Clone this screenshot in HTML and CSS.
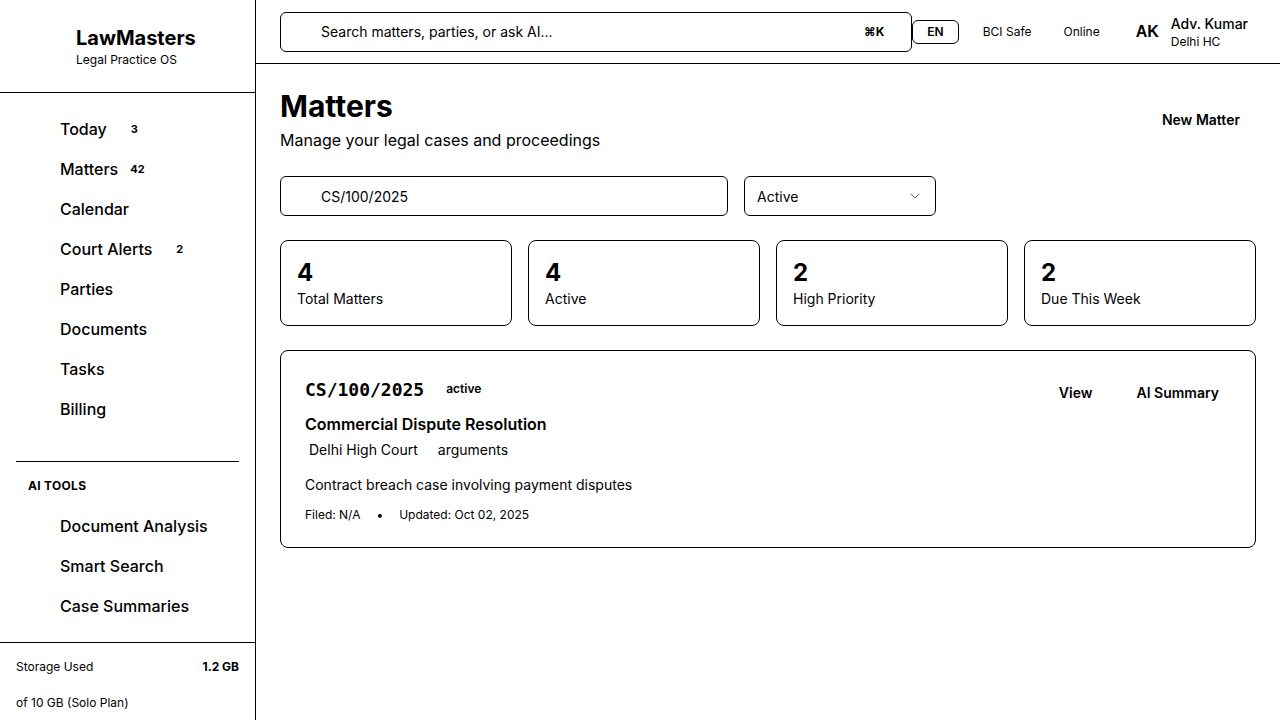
FILE: index.html
```html
<!DOCTYPE html>
<html lang="en">
<head>
  <meta charset="UTF-8" />
  <meta name="viewport" content="width=device-width, initial-scale=1" />
  <title>LawMasters - Matters</title>
  <link rel="stylesheet" href="styles.css">
</head>
<body>

  <aside class="sidebar">
    <div class="brand">
      <div class="brand__name">LawMasters</div>
      <div class="brand__tag">Legal Practice OS</div>
    </div>

    <nav class="nav">
      <a class="nav__item">Today <span class="nav__badge nav__badge--wide">3</span></a>
      <a class="nav__item">Matters <span class="nav__badge">42</span></a>
      <a class="nav__item">Calendar</a>
      <a class="nav__item">Court Alerts <span class="nav__badge nav__badge--wide">2</span></a>
      <a class="nav__item">Parties</a>
      <a class="nav__item">Documents</a>
      <a class="nav__item">Tasks</a>
      <a class="nav__item">Billing</a>
    </nav>

    <div class="tools">
      <div class="tools__title">AI Tools</div>
      <a class="nav__item">Document Analysis</a>
      <a class="nav__item">Smart Search</a>
      <a class="nav__item">Case Summaries</a>
    </div>

    <div class="storage">
      <div class="storage__row">
        <span>Storage Used</span>
        <strong>1.2 GB</strong>
      </div>
      <div class="storage__plan">of 10 GB (Solo Plan)</div>
    </div>
  </aside>

  <div class="main">
    <header class="topbar">
      <div class="search">
        <span class="search__text">Search matters, parties, or ask AI...</span>
        <span class="search__kbd">⌘K</span>
      </div>
      <button class="lang">EN</button>
      <span class="status">BCI Safe</span>
      <span class="status">Online</span>
      <div class="user">
        <span class="user__avatar">AK</span>
        <div>
          <div class="user__name">Adv. Kumar</div>
          <div class="user__court">Delhi HC</div>
        </div>
      </div>
    </header>

    <main class="page">
      <div class="page__head">
        <div>
          <h1 class="page__title">Matters</h1>
          <p class="page__sub">Manage your legal cases and proceedings</p>
        </div>
        <button class="btn">New Matter</button>
      </div>

      <div class="filters">
        <div class="field field--search">CS/100/2025</div>
        <div class="field field--select">
          <span>Active</span>
          <svg width="16" height="16" viewBox="0 0 24 24" fill="none" stroke="#666" stroke-width="1.5" stroke-linecap="round" stroke-linejoin="round"><polyline points="6 9 12 15 18 9" /></svg>
        </div>
      </div>

      <div class="stats">
        <div class="stat"><div class="stat__num">4</div><div class="stat__label">Total Matters</div></div>
        <div class="stat"><div class="stat__num">4</div><div class="stat__label">Active</div></div>
        <div class="stat"><div class="stat__num">2</div><div class="stat__label">High Priority</div></div>
        <div class="stat"><div class="stat__num">2</div><div class="stat__label">Due This Week</div></div>
      </div>

      <div class="matter">
        <div class="matter__top">
          <div class="matter__id">
            <span class="matter__no">CS/100/2025</span>
            <span class="matter__state">active</span>
          </div>
          <div class="matter__actions">
            <button class="btn btn--sm">View</button>
            <button class="btn btn--sm">AI Summary</button>
          </div>
        </div>
        <div class="matter__title">Commercial Dispute Resolution</div>
        <div class="matter__tags">
          <span>Delhi High Court</span>
          <span>arguments</span>
        </div>
        <p class="matter__desc">Contract breach case involving payment disputes</p>
        <div class="matter__meta">
          <span>Filed: N/A</span>
          <span class="dot">•</span>
          <span>Updated: Oct 02, 2025</span>
        </div>
      </div>
    </main>
  </div>

</body>
</html>
```

FILE: styles.css
```css
html, body {
  margin: 0;
  padding: 0;
  height: 100%;
  background: white;
  color: #000;
  font-family: 'Inter', 'Noto Sans', sans-serif;
}

body {
  display: flex;
  overflow: hidden;
}

button {
  font-family: inherit;
  background: none;
  border: none;
  color: inherit;
  cursor: pointer;
}

/* sidebar */

.sidebar {
  width: 255px;
  flex-shrink: 0;
  border-right: 1px solid #000;
  height: 100vh;
  display: flex;
  flex-direction: column;
}

.brand {
  padding: 24px 24px 24px 76px;
  border-bottom: 1px solid #000;
}

.brand__name {
  font-size: 20px;
  line-height: 28px;
  font-weight: 700;
}

.brand__tag {
  font-size: 12px;
  line-height: 16px;
}

.nav {
  padding: 16px;
}

.nav__item {
  display: flex;
  align-items: center;
  padding: 8px 12px 8px 44px;
  font-size: 16px;
  line-height: 24px;
  font-weight: 500;
}

.nav__badge {
  margin-left: 12px;
  font-size: 11px;
  font-weight: 700;
}

.nav__badge--wide {
  margin-left: 24px;
}

.tools {
  margin: 16px 16px 0;
  padding: 16px 0;
  border-top: 1px solid #000;
}

.tools__title {
  padding: 0 12px;
  font-size: 12px;
  line-height: 16px;
  font-weight: 700;
  text-transform: uppercase;
  letter-spacing: 0.3px;
  margin-bottom: 12px;
}

.storage {
  border-top: 1px solid #000;
  padding: 16px;
  font-size: 12px;
  line-height: 16px;
  flex: 1;
}

.storage__row {
  display: flex;
  justify-content: space-between;
}

.storage__plan {
  margin-top: 20px;
}

/* top bar */

.main {
  flex: 1;
  min-width: 0;
}

.topbar {
  height: 63px;
  border-bottom: 1px solid #000;
  display: flex;
  align-items: center;
  padding: 0 32px 0 24px;
}

.search {
  flex: 1;
  height: 38px;
  border: 1px solid #000;
  border-radius: 6px;
  display: flex;
  align-items: center;
  justify-content: space-between;
  padding: 0 27px 0 40px;
  font-size: 14px;
}

.search__kbd {
  font-size: 12px;
  font-weight: 700;
}

.lang {
  height: 24px;
  padding: 0 14px;
  border: 1px solid #000;
  border-radius: 6px;
  font-size: 12px;
  font-weight: 600;
  margin-right: 16px;
}

.status {
  font-size: 12px;
  padding: 0 8px;
  margin-right: 16px;
}

.user {
  display: flex;
  align-items: center;
  gap: 12px;
  padding-left: 12px;
}

.user__avatar {
  font-family: 'Liberation Sans', Arial, sans-serif;
  font-weight: 700;
  font-size: 16px;
}

.user__name {
  font-size: 14px;
  line-height: 20px;
  font-weight: 500;
}

.user__court {
  font-size: 12px;
  line-height: 16px;
}

/* page */

.page {
  padding: 24px;
}

.page__head {
  display: flex;
  justify-content: space-between;
  align-items: center;
}

.page__title {
  margin: 0;
  font-size: 30px;
  line-height: 36px;
  font-weight: 700;
}

.page__sub {
  margin: 4px 0 0;
  font-size: 16px;
  line-height: 24px;
}

.btn {
  padding: 8px 16px;
  font-size: 14px;
  line-height: 20px;
  font-weight: 600;
}

.filters {
  display: flex;
  gap: 16px;
  margin-top: 24px;
}

.field {
  height: 38px;
  border: 1px solid #000;
  border-radius: 6px;
  display: flex;
  align-items: center;
  font-size: 14px;
}

.field--search {
  width: 406px;
  padding-left: 40px;
}

.field--select {
  width: 166px;
  padding: 0 12px;
  justify-content: space-between;
}

.stats {
  display: grid;
  grid-template-columns: repeat(4, 1fr);
  gap: 16px;
  margin-top: 24px;
}

.stat {
  border: 1px solid #000;
  border-radius: 8px;
  padding: 16px;
}

.stat__num {
  font-size: 24px;
  line-height: 32px;
  font-weight: 700;
}

.stat__label {
  font-size: 14px;
  line-height: 20px;
}

.matter {
  margin-top: 24px;
  border: 1px solid #000;
  border-radius: 8px;
  padding: 24px;
}

.matter__top {
  display: flex;
  justify-content: space-between;
  align-items: flex-start;
}

.matter__id {
  display: flex;
  align-items: center;
  gap: 22px;
  height: 28px;
}

.matter__no {
  font-family: 'DejaVu Sans Mono', monospace;
  font-size: 18px;
  font-weight: 700;
}

.matter__state {
  font-size: 12px;
  font-weight: 600;
  margin-top: -2px;
}

.matter__actions {
  display: flex;
  gap: 20px;
}

.btn--sm {
  padding: 8px 12px;
}

.matter__title {
  margin-top: 1px;
  font-size: 16px;
  line-height: 24px;
  font-weight: 600;
}

.matter__tags {
  display: flex;
  gap: 12px;
  margin-top: 4px;
  font-size: 14px;
  line-height: 20px;
}

.matter__tags span {
  padding: 0 4px;
}

.matter__desc {
  margin: 15px 0 0;
  font-size: 14px;
  line-height: 20px;
}

.matter__meta {
  display: flex;
  gap: 16px;
  margin-top: 12px;
  font-size: 12px;
  line-height: 16px;
}
```
